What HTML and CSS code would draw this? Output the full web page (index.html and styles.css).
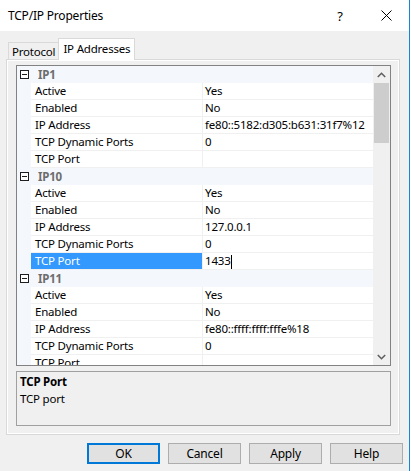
FILE: index.html
```html
<!DOCTYPE html>
<html lang="en">
<head>
    <meta charset="UTF-8">
    <title>TCP/IP Properties</title>
    <link rel="stylesheet" href="styles.css">
</head>
<body>
    <div class="window">
        <!-- title bar -->
        <div class="titlebar">
            <span class="title">TCP/IP Properties</span>
            <span class="title-help">?</span>
            <span class="title-close">
                <svg width="11" height="11" viewBox="0 0 11 11"><path d="M0.5 0.5 L10.5 10.5 M10.5 0.5 L0.5 10.5" stroke="#000" stroke-width="1" fill="none"/></svg>
            </span>
        </div>

        <div class="dialog-body">
            <!-- tabs -->
            <div class="tabs">
                <div class="tab">Protocol</div>
                <div class="tab active">IP Addresses</div>
            </div>

            <div class="panel">
                <!-- property grid -->
                <div class="grid">
                    <div class="rows">
                        <div class="category"><span class="toggle"></span><span class="cat-label">IP1</span></div>
                        <div class="row"><span class="gutter"></span><span class="name">Active</span><span class="value">Yes</span></div>
                        <div class="row"><span class="gutter"></span><span class="name">Enabled</span><span class="value">No</span></div>
                        <div class="row"><span class="gutter"></span><span class="name">IP Address</span><span class="value">fe80::5182:d305:b631:31f7%12</span></div>
                        <div class="row"><span class="gutter"></span><span class="name">TCP Dynamic Ports</span><span class="value">0</span></div>
                        <div class="row"><span class="gutter"></span><span class="name">TCP Port</span><span class="value"></span></div>

                        <div class="category"><span class="toggle"></span><span class="cat-label">IP10</span></div>
                        <div class="row"><span class="gutter"></span><span class="name">Active</span><span class="value">Yes</span></div>
                        <div class="row"><span class="gutter"></span><span class="name">Enabled</span><span class="value">No</span></div>
                        <div class="row"><span class="gutter"></span><span class="name">IP Address</span><span class="value">127.0.0.1</span></div>
                        <div class="row"><span class="gutter"></span><span class="name">TCP Dynamic Ports</span><span class="value">0</span></div>
                        <div class="row selected"><span class="gutter"></span><span class="name">TCP Port</span><span class="value">1433<span class="caret"></span></span></div>

                        <div class="category"><span class="toggle"></span><span class="cat-label">IP11</span></div>
                        <div class="row"><span class="gutter"></span><span class="name">Active</span><span class="value">Yes</span></div>
                        <div class="row"><span class="gutter"></span><span class="name">Enabled</span><span class="value">No</span></div>
                        <div class="row"><span class="gutter"></span><span class="name">IP Address</span><span class="value">fe80::ffff:ffff:fffe%18</span></div>
                        <div class="row"><span class="gutter"></span><span class="name">TCP Dynamic Ports</span><span class="value">0</span></div>
                        <div class="row"><span class="gutter"></span><span class="name">TCP Port</span><span class="value"></span></div>
                    </div>

                    <!-- vertical scrollbar -->
                    <div class="scrollbar">
                        <div class="scroll-arrow">
                            <svg width="9" height="6" viewBox="0 0 9 6"><path d="M0.8 5 L4.5 1.3 L8.2 5" stroke="#606060" stroke-width="1.6" fill="none"/></svg>
                        </div>
                        <div class="scroll-track">
                            <div class="scroll-thumb"></div>
                        </div>
                        <div class="scroll-arrow">
                            <svg width="9" height="6" viewBox="0 0 9 6"><path d="M0.8 1 L4.5 4.7 L8.2 1" stroke="#606060" stroke-width="1.6" fill="none"/></svg>
                        </div>
                    </div>
                </div>

                <!-- description -->
                <div class="desc">
                    <div class="desc-title">TCP Port</div>
                    <div class="desc-text">TCP port</div>
                </div>
            </div>

            <!-- buttons -->
            <div class="buttons">
                <button class="btn default">OK</button>
                <button class="btn">Cancel</button>
                <button class="btn">Apply</button>
                <button class="btn">Help</button>
            </div>
        </div>
    </div>
</body>
</html>
```

FILE: styles.css
```css
html, body {
    margin: 0;
    padding: 0;
}

body {
    width: 412px;
    height: 471px;
    overflow: hidden;
    background-color: #ffffff;
    font-family: 'Segoe UI', 'Noto Sans', sans-serif;
    font-size: 11.5px;
    letter-spacing: -0.2px;
    color: #000;
}

.window {
    width: 409px;
    height: 471px;
    border-right: 1px solid #1883d7;
    background-color: #f0f0f0;
}

/* title bar */
.titlebar {
    height: 31px;
    background-color: #fff;
    display: flex;
    align-items: center;
}

.title {
    margin-left: 8px;
    font-size: 12px;
    flex: 1;
}

.title-help {
    width: 46px;
    text-align: center;
    font-size: 13px;
}

.title-close {
    width: 46px;
    display: flex;
    justify-content: center;
}

.dialog-body {
    padding-top: 7px;
}

/* tabs */
.tabs {
    display: flex;
    align-items: flex-end;
    margin-left: 8px;
    height: 21px;
    position: relative;
    z-index: 1;
}

.tab {
    height: 16px;
    line-height: 17px;
    padding: 0 3px;
    border: 1px solid #d9d9d9;
    border-bottom: none;
    background-color: #f0f0f0;
}

.tab.active {
    height: 21px;
    line-height: 19px;
    padding: 0 4px;
    margin-left: -1px;
    background-color: #fff;
    margin-bottom: -1px;
}

/* panel */
.panel {
    margin-left: 6px;
    width: 394px;
    height: 376px;
    border: 1px solid #d9d9d9;
    box-shadow: inset 1px 1px 0 #fff, inset -1px -1px 0 #fff;
    padding: 5px 0 0 9px;
    box-sizing: border-box;
}

/* property grid */
.grid {
    width: 375px;
    height: 301px;
    border: 1px solid #828282;
    box-sizing: border-box;
    display: flex;
    background-color: #fff;
}

.rows {
    flex: 1;
    overflow: hidden;
}

.category {
    height: 17px;
    background-color: #f4f7fc;
    display: flex;
    align-items: center;
}

.toggle {
    width: 7px;
    height: 7px;
    border: 1px solid #1e1e1e;
    margin-left: 3px;
    margin-right: 9px;
    position: relative;
    background-color: #fff;
}

.toggle::after {
    content: '';
    position: absolute;
    left: 1px;
    top: 3px;
    width: 5px;
    height: 1px;
    background-color: #1e1e1e;
}

.cat-label {
    font-weight: bold;
    color: #6d6d6d;
}

.row {
    display: grid;
    grid-template-columns: 14px 171px 1fr;
    height: 17px;
}

.gutter {
    background-color: #f4f7fc;
}

.name,
.value {
    height: 16px;
    line-height: 16px;
    border-bottom: 1px solid #f0f0f0;
    white-space: nowrap;
    overflow: hidden;
}

.name {
    padding-left: 4px;
}

.value {
    padding-left: 2px;
    border-left: 1px solid #f0f0f0;
}

.row.selected .name {
    background-color: #3399ff;
    color: #fff;
}

.caret {
    display: inline-block;
    width: 1px;
    height: 14px;
    background-color: #000;
    vertical-align: middle;
}

.scrollbar {
    width: 17px;
    background-color: #f0f0f0;
    display: flex;
    flex-direction: column;
}

.scroll-arrow {
    height: 17px;
    display: flex;
    align-items: center;
    justify-content: center;
}

.scroll-track {
    flex: 1;
    padding: 0 1px;
}

.scroll-thumb {
    height: 60px;
    background-color: #cdcdcd;
}

/* description */
.desc {
    margin-top: 5px;
    width: 375px;
    height: 55px;
    border: 1px solid #a0a0a0;
    box-sizing: border-box;
    padding: 1px 3px;
}

.desc-title {
    font-weight: bold;
    line-height: 17px;
}

.desc-text {
    line-height: 17px;
}

/* buttons */
.buttons {
    display: flex;
    gap: 8px;
    margin-top: 8px;
    margin-left: 87px;
}

.btn {
    width: 73px;
    height: 21px;
    font-family: inherit;
    font-size: 12px;
    letter-spacing: inherit;
    background-color: #e1e1e1;
    border: 1px solid #adadad;
    padding: 0;
    color: #000;
}

.btn.default {
    border: 2px solid #0078d7;
}
```
